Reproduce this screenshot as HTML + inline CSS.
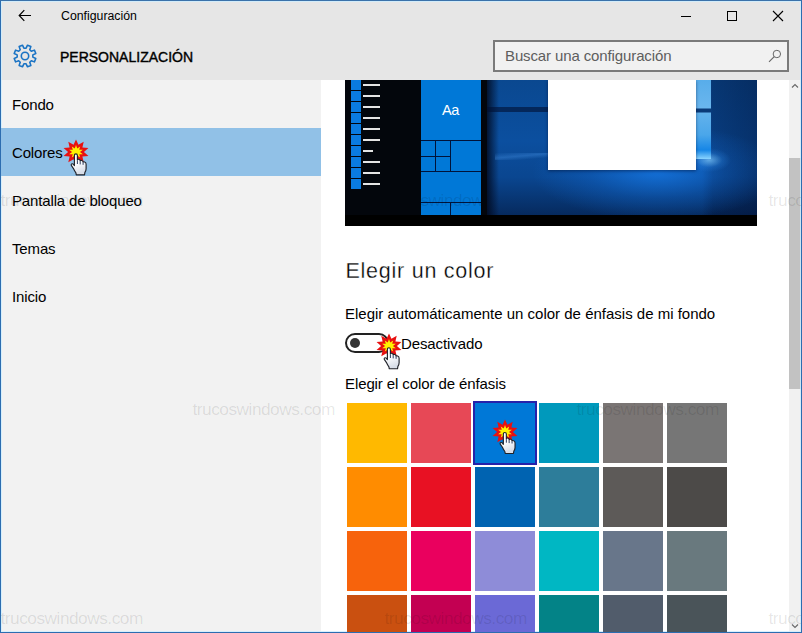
<!DOCTYPE html>
<html><head><meta charset="utf-8">
<style>
*{box-sizing:border-box;margin:0;padding:0}
html,body{width:802px;height:633px;overflow:hidden;background:#e6e6e6;font-family:"Liberation Sans",sans-serif;color:#000}
.abs{position:absolute}
#win{left:0;top:0;width:802px;height:633px;border:1px solid #2c6db0;border-top-color:#3a72aa;z-index:50;pointer-events:none}
#fringe{left:1px;top:1px;width:800px;height:631px;border:1px solid rgba(205,238,255,.8)}
#side{left:1px;top:80px;width:320px;height:553px;background:#f2f2f2}
#content{left:321px;top:80px;width:468px;height:553px;background:#fff}
#sbar{left:789px;top:80px;width:12px;height:553px;background:#f1f1f1}
#thumb{left:789px;top:158px;width:12px;height:231px;background:#c2c2c2}
.nav{left:1px;width:320px;height:48px;font-size:15px;line-height:50px;padding-left:11px;letter-spacing:-0.15px;white-space:nowrap}
.sel{background:#91c1e7}
.t{white-space:nowrap}
.wm{color:rgba(0,0,0,.1);font-size:17.3px;letter-spacing:-0.5px;line-height:20px;white-space:nowrap;z-index:40}
#prev{left:345px;top:80px;width:412px;height:146px;background:#03060c;overflow:hidden;z-index:41}
#desk{left:142px;top:0;width:270px;height:135px;background:
 radial-gradient(ellipse 22px 12px at 222px 80px, rgba(130,205,255,.7), rgba(60,160,255,.2) 60%, rgba(0,0,0,0) 100%),
 radial-gradient(ellipse 125px 48px at 170px 92px, rgba(25,135,255,.62), rgba(20,120,235,.28) 55%, rgba(0,0,0,0) 100%),
 linear-gradient(90deg, rgba(0,6,24,.8) 0, rgba(0,0,0,0) 12px, rgba(0,0,0,0) 215px, rgba(0,8,36,.28) 226px, rgba(0,8,36,.42) 270px),
 linear-gradient(180deg,#0a4890 0,#0b4f9f 45%,#0a4690 72%,#062a5e 100%)}
</style></head><body>
<svg width="0" height="0" style="position:absolute">
<defs>
<linearGradient id="hg" x1="0" y1="0" x2="0.3" y2="1"><stop offset="0" stop-color="#ffffff"/><stop offset="0.55" stop-color="#fafbfd"/><stop offset="1" stop-color="#d8dee8"/></linearGradient>
<g id="bst">
<path d="M0.00 -12.60 L2.44 -7.23 L7.70 -10.19 L6.39 -4.47 L12.46 -3.89 L7.90 0.00 L12.46 3.89 L6.39 4.47 L7.70 10.19 L2.44 7.23 L0.00 12.60 L-2.44 7.23 L-7.70 10.19 L-6.39 4.47 L-12.46 3.89 L-7.90 0.00 L-12.46 -3.89 L-6.39 -4.47 L-7.70 -10.19 L-2.44 -7.23Z" fill="#e81010"/>
<path d="M0.00 -6.90 L1.22 -3.61 L4.22 -5.58 L3.20 -2.23 L6.82 -2.13 L3.95 0.00 L6.82 2.13 L3.20 2.23 L4.22 5.58 L1.22 3.61 L0.00 6.90 L-1.22 3.61 L-4.22 5.58 L-3.20 2.23 L-6.82 2.13 L-3.95 0.00 L-6.82 -2.13 L-3.20 -2.23 L-4.22 -5.58 L-1.22 -3.61Z" fill="#fff200"/>
</g>
<g id="hnd">
<path d="M-1.5 2.6 Q-1.5 1 0 1 Q1.5 1 1.5 2.6 L1.5 7.2 Q1.8 6.3 3 6.5 Q4.3 6.8 4.3 8.2 Q4.6 7.4 5.9 7.7 Q7.2 8 7.2 9.4 Q7.6 8.8 8.8 9.2 Q10.2 9.7 10.2 11.4 L10.2 16 Q10.2 18 9 19.5 L8.6 22 L0.4 22 L0 20 Q-1.2 18.5 -2.6 15.5 L-4.6 12.6 Q-5 11.4 -4 11 Q-3 10.8 -2.2 11.8 L-1.5 12.8 Z" fill="url(#hg)" stroke="#20232a" stroke-width="1.15" stroke-linejoin="round"/>
<path d="M1.5 7.6 L1.5 11.2 M4.3 8.6 L4.3 11.6 M7.2 9.8 L7.2 12" stroke="#2c3d60" stroke-width="1" fill="none"/>
</g>
</defs></svg>
<div id="side" class="abs"></div>
<div id="content" class="abs"></div>
<div id="sbar" class="abs"></div><div id="thumb" class="abs"></div>
<div id="fringe" class="abs"></div>
<svg class="abs" style="left:789px;top:80px" width="12" height="553" viewBox="0 0 12 553"><path d="M3 7.5 L6 4.5 L9 7.5 M3 544.5 L6 547.5 L9 544.5" fill="none" stroke="#6a6a6a" stroke-width="1.15"/></svg>

<!-- title bar -->
<svg class="abs" style="left:18px;top:9px" width="14" height="13" viewBox="0 0 14 13"><path d="M1.2 6.5 H13 M6.3 1.2 L1.2 6.5 L6.3 11.8" fill="none" stroke="#000" stroke-width="1.2"/></svg>
<div class="abs t" style="left:61px;top:8px;font-size:12.3px;line-height:16px">Configuración</div>
<svg class="abs" style="left:670px;top:5px" width="125" height="22" viewBox="0 0 125 22" shape-rendering="crispEdges"><path d="M11 11.5 H21" stroke="#000" stroke-width="1"/><rect x="57.5" y="6.5" width="9" height="9" fill="none" stroke="#000" stroke-width="1"/></svg>
<svg class="abs" style="left:772px;top:10px" width="12" height="12" viewBox="0 0 12 12"><path d="M1 1 L11 11 M11 1 L1 11" stroke="#000" stroke-width="1.1"/></svg>

<!-- header -->
<svg class="abs" style="left:13px;top:44px" width="24" height="24" viewBox="0 0 24 24"><path d="M19.82 13.10 L22.82 14.50 L21.41 17.88 L18.31 16.75 L16.75 18.31 L17.88 21.41 L14.50 22.82 L13.10 19.82 L10.90 19.82 L9.50 22.82 L6.12 21.41 L7.25 18.31 L5.69 16.75 L2.59 17.88 L1.18 14.50 L4.18 13.10 L4.18 10.90 L1.18 9.50 L2.59 6.12 L5.69 7.25 L7.25 5.69 L6.12 2.59 L9.50 1.18 L10.90 4.18 L13.10 4.18 L14.50 1.18 L17.88 2.59 L16.75 5.69 L18.31 7.25 L21.41 6.12 L22.82 9.50 L19.82 10.90Z" fill="none" stroke="#1a73c4" stroke-width="1.55" stroke-linejoin="round"/><circle cx="12" cy="12" r="3.7" fill="none" stroke="#1a73c4" stroke-width="1.6"/></svg>
<div class="abs t" id="pers" style="left:60px;top:47px;font-size:14px;line-height:20px;-webkit-text-stroke:0.4px #000;letter-spacing:0px">PERSONALIZACIÓN</div>
<div class="abs" style="left:493px;top:40px;width:296px;height:32px;border:2px solid #7a7a7a;background:#f1f1f1"></div>
<div class="abs t" style="left:505px;top:46px;font-size:15px;line-height:20px;letter-spacing:-0.12px;color:#5e5e5e">Buscar una configuración</div>
<svg class="abs" style="left:767px;top:48px" width="16" height="16" viewBox="0 0 16 16"><circle cx="9.85" cy="6" r="3.7" fill="none" stroke="#666" stroke-width="1"/><path d="M7.2 8.7 L2 13.9" stroke="#666" stroke-width="1.1"/></svg>

<!-- nav -->
<div class="abs nav" style="top:80px">Fondo</div>
<div class="abs nav sel" style="top:128px">Colores</div>
<div class="abs nav" style="top:176px">Pantalla de bloqueo</div>
<div class="abs nav" style="top:224px">Temas</div>
<div class="abs nav" style="top:272px">Inicio</div>

<!-- preview -->
<div id="prev" class="abs">
<div id="desk" class="abs"></div>
<div class="abs" style="left:142px;top:27px;width:61px;height:5px;background:rgba(0,15,50,.6)"></div><div class="abs" style="left:150px;top:73px;width:53px;height:7px;background:linear-gradient(175deg,rgba(90,170,255,0) 0,rgba(90,170,255,.28) 45%,rgba(90,170,255,0) 80%)"></div>
<div class="abs" style="left:351px;top:0;width:15px;height:79px;background:linear-gradient(180deg,#58adea 0,#6ab6ee 28px,#0a3a78 29px,#0a3a78 32px,#62b2ec 33px,#4aa6ea 55px,#1686e6 70px,#8ad4ff 79px)"></div>
<div class="abs" style="left:203px;top:0;width:148px;height:90px;background:#fff;box-shadow:0 1px 3px rgba(0,10,40,.5)"></div>
<div class="abs" style="left:0;top:135px;width:412px;height:11px;background:#000"></div>
<div class="abs" style="left:6px;top:0px;width:10px;height:10px;background:#0a7be0"></div><div class="abs" style="left:18px;top:4px;width:17px;height:2px;background:#e4e4e4"></div>
<div class="abs" style="left:6px;top:11px;width:10px;height:10px;background:#0a7be0"></div><div class="abs" style="left:18px;top:15px;width:17px;height:2px;background:#e4e4e4"></div>
<div class="abs" style="left:6px;top:22px;width:10px;height:10px;background:#0a7be0"></div><div class="abs" style="left:18px;top:26px;width:17px;height:2px;background:#e4e4e4"></div>
<div class="abs" style="left:6px;top:33px;width:10px;height:10px;background:#0a7be0"></div><div class="abs" style="left:18px;top:37px;width:17px;height:2px;background:#e4e4e4"></div>
<div class="abs" style="left:6px;top:44px;width:10px;height:10px;background:#0a7be0"></div><div class="abs" style="left:18px;top:48px;width:17px;height:2px;background:#e4e4e4"></div>
<div class="abs" style="left:6px;top:55px;width:10px;height:10px;background:#0a7be0"></div><div class="abs" style="left:18px;top:59px;width:17px;height:2px;background:#e4e4e4"></div>
<div class="abs" style="left:6px;top:66px;width:10px;height:10px;background:#0a7be0"></div><div class="abs" style="left:18px;top:70px;width:10px;height:2px;background:#e4e4e4"></div>
<div class="abs" style="left:6px;top:77px;width:10px;height:10px;background:#0a7be0"></div><div class="abs" style="left:18px;top:81px;width:17px;height:2px;background:#e4e4e4"></div>
<div class="abs" style="left:6px;top:88px;width:10px;height:10px;background:#0a7be0"></div><div class="abs" style="left:18px;top:92px;width:17px;height:2px;background:#e4e4e4"></div>
<div class="abs" style="left:6px;top:99px;width:10px;height:10px;background:#0a7be0"></div><div class="abs" style="left:18px;top:103px;width:17px;height:2px;background:#e4e4e4"></div>
<div class="abs" style="left:76px;top:0;width:60px;height:135px;background:#00133a"></div><div class="abs" style="left:76px;top:0px;width:60px;height:60px;background:#0078d7"></div><div class="abs" style="left:76px;top:61px;width:14px;height:15px;background:#0078d7"></div><div class="abs" style="left:91px;top:61px;width:14px;height:15px;background:#0078d7"></div><div class="abs" style="left:76px;top:77px;width:14px;height:14px;background:#0078d7"></div><div class="abs" style="left:91px;top:77px;width:14px;height:14px;background:#0078d7"></div><div class="abs" style="left:106px;top:61px;width:30px;height:30px;background:#0078d7"></div><div class="abs" style="left:76px;top:92px;width:60px;height:30px;background:#0078d7"></div><div class="abs" style="left:76px;top:123px;width:29px;height:12px;background:#0078d7"></div><div class="abs" style="left:106px;top:123px;width:30px;height:12px;background:#0078d7"></div>
<div class="abs t" style="left:97px;top:20px;font-size:14.5px;line-height:20px;color:#fff;letter-spacing:-0.5px">Aa</div>
<div class="abs" style="left:76px;top:0;width:60px;height:135px;overflow:hidden"><div class="abs wm" style="left:-36.5px;top:110px;color:rgba(0,0,0,.11)">trucoswindows.com</div></div>
</div>

<div class="abs t" style="left:345.5px;top:257px;font-size:21.5px;line-height:29px;letter-spacing:.75px;color:#000;-webkit-text-stroke:0.3px #fff">Elegir un color</div>
<div class="abs t" style="left:345px;top:304px;font-size:15px;line-height:20px">Elegir automáticamente un color de énfasis de mi fondo</div>
<div class="abs" style="left:345px;top:333px;width:44px;height:20px;border:2px solid #222;border-radius:10px;background:#fff"></div>
<div class="abs" style="left:350px;top:338px;width:10px;height:10px;border-radius:5px;background:#333"></div>
<div class="abs t" style="left:401px;top:334px;font-size:15px;line-height:20px;letter-spacing:-0.1px">Desactivado</div>
<div class="abs t" style="left:345px;top:374px;font-size:15px;line-height:20px;letter-spacing:-0.1px">Elegir el color de énfasis</div>
<div class="abs" style="left:347px;top:403px;width:60px;height:60px;background:#FFB900"></div>
<div class="abs" style="left:411px;top:403px;width:60px;height:60px;background:#E74856"></div>
<div class="abs" style="left:473px;top:401px;width:64px;height:64px;background:#0078D7;border:2px solid #2621aa"></div>
<div class="abs" style="left:539px;top:403px;width:60px;height:60px;background:#0099BC"></div>
<div class="abs" style="left:603px;top:403px;width:60px;height:60px;background:#7A7574"></div>
<div class="abs" style="left:667px;top:403px;width:60px;height:60px;background:#767676"></div>
<div class="abs" style="left:347px;top:467px;width:60px;height:60px;background:#FF8C00"></div>
<div class="abs" style="left:411px;top:467px;width:60px;height:60px;background:#E81123"></div>
<div class="abs" style="left:475px;top:467px;width:60px;height:60px;background:#0063B1"></div>
<div class="abs" style="left:539px;top:467px;width:60px;height:60px;background:#2D7D9A"></div>
<div class="abs" style="left:603px;top:467px;width:60px;height:60px;background:#5D5A58"></div>
<div class="abs" style="left:667px;top:467px;width:60px;height:60px;background:#4C4A48"></div>
<div class="abs" style="left:347px;top:531px;width:60px;height:60px;background:#F7630C"></div>
<div class="abs" style="left:411px;top:531px;width:60px;height:60px;background:#EA005E"></div>
<div class="abs" style="left:475px;top:531px;width:60px;height:60px;background:#8E8CD8"></div>
<div class="abs" style="left:539px;top:531px;width:60px;height:60px;background:#00B7C3"></div>
<div class="abs" style="left:603px;top:531px;width:60px;height:60px;background:#68768A"></div>
<div class="abs" style="left:667px;top:531px;width:60px;height:60px;background:#69797E"></div>
<div class="abs" style="left:347px;top:595px;width:60px;height:60px;background:#CA5010"></div>
<div class="abs" style="left:411px;top:595px;width:60px;height:60px;background:#C30052"></div>
<div class="abs" style="left:475px;top:595px;width:60px;height:60px;background:#6B69D6"></div>
<div class="abs" style="left:539px;top:595px;width:60px;height:60px;background:#038387"></div>
<div class="abs" style="left:603px;top:595px;width:60px;height:60px;background:#515C6B"></div>
<div class="abs" style="left:667px;top:595px;width:60px;height:60px;background:#4A5459"></div>

<div class="abs wm" style="left:0.5px;top:190px">trucoswindows.com</div>
<div class="abs wm" style="left:384.5px;top:190px">trucoswindows.com</div>
<div class="abs wm" style="left:768.5px;top:190px">trucoswindows.com</div>
<div class="abs wm" style="left:192.5px;top:399px">trucoswindows.com</div>
<div class="abs wm" style="left:576.5px;top:399px">trucoswindows.com</div>
<div class="abs wm" style="left:0.5px;top:608px">trucoswindows.com</div>
<div class="abs wm" style="left:384.5px;top:608px">trucoswindows.com</div>
<div class="abs wm" style="left:768.5px;top:608px">trucoswindows.com</div>

<svg class="abs" style="left:60.3px;top:136px;overflow:visible" width="40" height="44" viewBox="-16 -16 40 44"><use href="#bst"/><use href="#hnd" transform="translate(-0.1,0.8)"/></svg>

<svg class="abs" style="left:372.5px;top:330px;overflow:visible" width="40" height="44" viewBox="-16 -16 40 44"><use href="#bst"/><use href="#hnd" transform="translate(-0.1,0.8)"/></svg>

<svg class="abs" style="left:489.3px;top:415.5px;overflow:visible" width="40" height="44" viewBox="-16 -16 40 44"><use href="#bst"/><use href="#hnd" transform="translate(-0.15,-0.5)"/></svg>

<div id="win" class="abs"></div>
</body></html>
